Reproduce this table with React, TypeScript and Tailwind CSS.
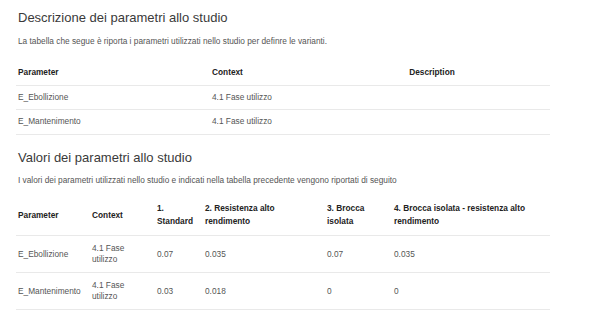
import React from 'react';

type Row = { param: string; context: string; values?: string[] };

const rows: Row[] = [
    { param: 'E_Ebollizione', context: '4.1 Fase utilizzo', values: ['0.07', '0.035', '0.07', '0.035'] },
    { param: 'E_Mantenimento', context: '4.1 Fase utilizzo', values: ['0.03', '0.018', '0', '0'] },
];

const th = 'pl-[2px] pr-2 py-0 text-left align-middle font-bold text-[#222] leading-[13px] border-b border-[#e9e9e9]';
const td = 'pl-[2px] pr-2 py-0 align-middle text-[#555] leading-[11px] border-b border-[#e9e9e9]';

const SectionTitle: React.FC<{ children: React.ReactNode }> = ({ children }) => (
    <h2 className="pl-[2px] text-[13px] leading-[16px] font-light text-[#3a3a3a]">{children}</h2>
);

export default function App() {
    return (
        <div className="w-[600px] h-[321px] bg-white overflow-hidden font-['Liberation_Sans',Arial,sans-serif] text-[8.3px]">
            <div className="ml-4 w-[534px]">
                <div className="pt-[10px]">
                    <SectionTitle>Descrizione dei parametri allo studio</SectionTitle>
                    <p className="mt-[10px] pl-[2px] text-[#555] leading-[11px]">
                        La tabella che segue è riporta i parametri utilizzati nello studio per definre le varianti.
                    </p>
                    <table className="mt-[13px] w-full table-fixed border-collapse">
                        <colgroup>
                            <col className="w-[194px]" />
                            <col className="w-[110px]" />
                            <col />
                        </colgroup>
                        <thead>
                            <tr className="h-[25px]">
                                <th className={th}>Parameter</th>
                                <th className={th}>Context</th>
                                <th className={th + ' !text-center'}>Description</th>
                            </tr>
                        </thead>
                        <tbody>
                            {rows.map((r) => (
                                <tr key={r.param} className="h-[24.5px]">
                                    <td className={td}>{r.param}</td>
                                    <td className={td}>{r.context}</td>
                                    <td className={td}></td>
                                </tr>
                            ))}
                        </tbody>
                    </table>
                </div>

                <div className="mt-[15px]">
                    <SectionTitle>Valori dei parametri allo studio</SectionTitle>
                    <p className="mt-[9px] pl-[2px] text-[#555] leading-[11px]">
                        I valori dei parametri utilizzati nello studio e indicati nella tabella precedente vengono riportati di seguito
                    </p>
                    <table className="mt-[10px] w-full table-fixed border-collapse">
                        <colgroup>
                            <col className="w-[74px]" />
                            <col className="w-[65px]" />
                            <col className="w-[48px]" />
                            <col className="w-[122px]" />
                            <col className="w-[67px]" />
                            <col />
                        </colgroup>
                        <thead>
                            <tr className="h-[40px]">
                                <th className={th}>Parameter</th>
                                <th className={th}>Context</th>
                                <th className={th}>1. Standard</th>
                                <th className={th}>2. Resistenza alto rendimento</th>
                                <th className={th}>3. Brocca isolata</th>
                                <th className={th}>4. Brocca isolata - resistenza alto rendimento</th>
                            </tr>
                        </thead>
                        <tbody>
                            {rows.map((r) => (
                                <tr key={r.param} className="h-[37px]">
                                    <td className={td}>{r.param}</td>
                                    <td className={td}>{r.context}</td>
                                    {r.values?.map((v, i) => (
                                        <td key={i} className={td}>{v}</td>
                                    ))}
                                </tr>
                            ))}
                        </tbody>
                    </table>
                </div>
            </div>
        </div>
    );
}
